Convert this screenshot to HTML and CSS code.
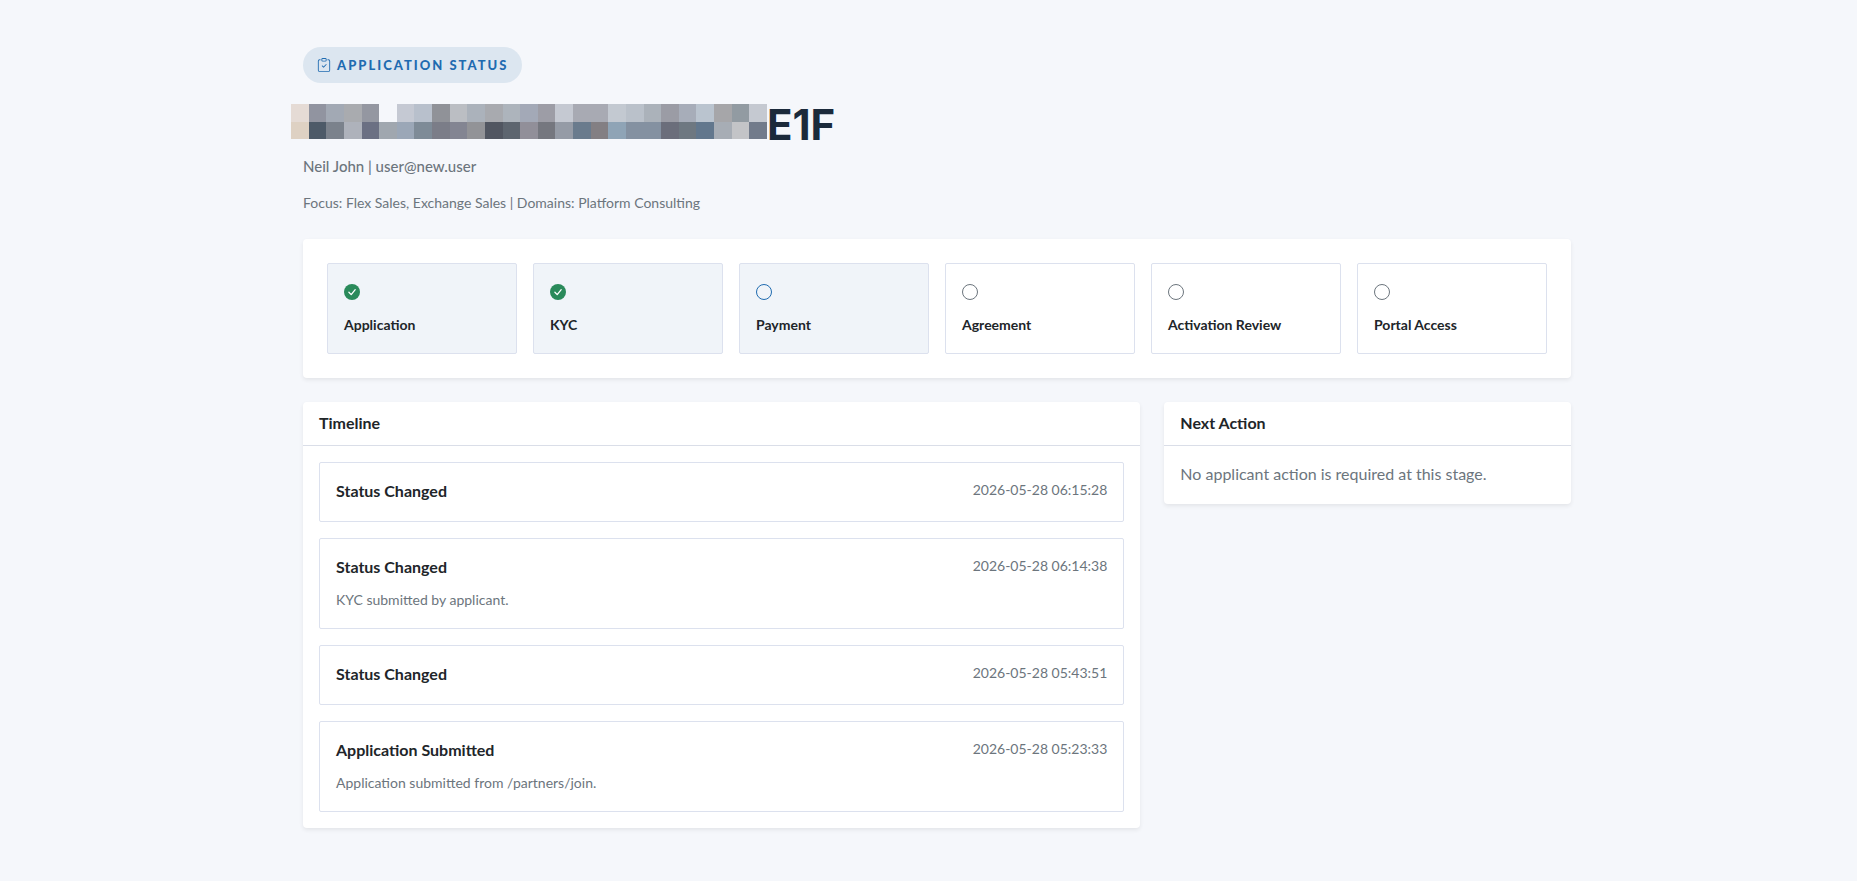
FILE: index.html
```html
<!DOCTYPE html>
<html lang="en">
<head>
<meta charset="utf-8">
<meta name="viewport" content="width=device-width, initial-scale=1">
<title>Application Status</title>
<link rel="stylesheet" href="styles.css">
</head>
<body>
<main class="page">
  <header class="intro">
    <span class="badge">
      <svg class="badge-icon" viewBox="0 0 16 16" fill="currentColor" aria-hidden="true"><path fill-rule="evenodd" d="M10.854 7.146a.5.5 0 0 1 0 .708l-3 3a.5.5 0 0 1-.708 0l-1.500-1.500a.5.5 0 1 1 .708-.708L7.500 9.793l2.646-2.647a.5.5 0 0 1 .708 0"/><path d="M4 1.500H3a2 2 0 0 0-2 2V14a2 2 0 0 0 2 2h10a2 2 0 0 0 2-2V3.500a2 2 0 0 0-2-2h-1v1h1a1 1 0 0 1 1 1V14a1 1 0 0 1-1 1H3a1 1 0 0 1-1-1V3.500a1 1 0 0 1 1-1h1z"/><path d="M9.500 1a.5.5 0 0 1 .5.5v1a.5.5 0 0 1-.5.5h-3a.5.5 0 0 1-.5-.5v-1a.5.5 0 0 1 .5-.5zm-3-1A1.500 1.500 0 0 0 5 1.500v1A1.500 1.500 0 0 0 6.500 4h3A1.500 1.500 0 0 0 11 2.500v-1A1.500 1.500 0 0 0 9.500 0z"/></svg>
      Application Status
    </span>
    <h1 class="title">
      <svg class="mask" viewBox="0 0 27 2" preserveAspectRatio="none" shape-rendering="crispEdges" aria-hidden="true">
        <path fill="#e5dbd5" d="M0 0h1v1h-1z"/><path fill="#9194a0" d="M1 0h1v1h-1z"/><path fill="#a2a9b4" d="M2 0h1v1h-1z"/><path fill="#a9abaf" d="M3 0h1v1h-1z"/><path fill="#9497a1" d="M4 0h1v1h-1z"/><path fill="#c5c9d3" d="M6 0h1v1h-1z"/><path fill="#b8c0cc" d="M7 0h1v1h-1z"/><path fill="#909298" d="M8 0h1v1h-1z"/><path fill="#bbbec3" d="M9 0h1v1h-1z"/><path fill="#abb2bb" d="M10 0h1v1h-1z"/><path fill="#a8aaaf" d="M11 0h1v1h-1z"/><path fill="#adb4bc" d="M12 0h1v1h-1z"/><path fill="#a3a9b7" d="M13 0h1v1h-1z"/><path fill="#9d9da6" d="M14 0h1v1h-1z"/><path fill="#c5c9d2" d="M15 0h1v1h-1z"/><path fill="#a8aab3" d="M16 0h2v1h-2z"/><path fill="#c3c9d1" d="M18 0h1v1h-1z"/><path fill="#bac1ca" d="M19 0h1v1h-1z"/><path fill="#abb2ba" d="M20 0h1v1h-1z"/><path fill="#9b9ca5" d="M21 0h1v1h-1z"/><path fill="#a7adb9" d="M22 0h1v1h-1z"/><path fill="#bac4cf" d="M23 0h1v1h-1z"/><path fill="#a6a6a9" d="M24 0h1v1h-1z"/><path fill="#929ba2" d="M25 0h1v1h-1z"/><path fill="#c5c9d1" d="M26 0h1v1h-1z"/>
        <path fill="#ded1c3" d="M0 1h1v1h-1z"/><path fill="#4d5a68" d="M1 1h1v1h-1z"/><path fill="#7b828c" d="M2 1h1v1h-1z"/><path fill="#aeb2bb" d="M3 1h1v1h-1z"/><path fill="#6b7083" d="M4 1h1v1h-1z"/><path fill="#a0a7af" d="M5 1h1v1h-1z"/><path fill="#9ba7b7" d="M6 1h1v1h-1z"/><path fill="#7e8b97" d="M7 1h1v1h-1z"/><path fill="#7b7d88" d="M8 1h1v1h-1z"/><path fill="#838592" d="M9 1h1v1h-1z"/><path fill="#929397" d="M10 1h1v1h-1z"/><path fill="#515661" d="M11 1h1v1h-1z"/><path fill="#5d656f" d="M12 1h1v1h-1z"/><path fill="#918f99" d="M13 1h1v1h-1z"/><path fill="#75777f" d="M14 1h1v1h-1z"/><path fill="#959ba6" d="M15 1h1v1h-1z"/><path fill="#6a7b8d" d="M16 1h1v1h-1z"/><path fill="#837f83" d="M17 1h1v1h-1z"/><path fill="#8fa4b6" d="M18 1h1v1h-1z"/><path fill="#8491a1" d="M19 1h2v1h-2z"/><path fill="#6b6e7b" d="M21 1h1v1h-1z"/><path fill="#6e7881" d="M22 1h1v1h-1z"/><path fill="#62778d" d="M23 1h1v1h-1z"/><path fill="#a7adb5" d="M24 1h1v1h-1z"/><path fill="#c3c4c7" d="M25 1h1v1h-1z"/><path fill="#727b8b" d="M26 1h1v1h-1z"/>
      </svg>
      <span class="title-text">E1F</span>
    </h1>
    <p class="applicant">Neil John | user@new.user</p>
    <p class="focus">Focus: Flex Sales, Exchange Sales | Domains: Platform Consulting</p>
  </header>

  <section class="card progress" aria-label="Progress">
    <ol class="steps">
      <li class="step is-active"><svg class="step-icon done" viewBox="0 0 16 16" aria-hidden="true"><circle cx="8" cy="8" r="8" fill="currentColor"/><path d="M4.900 8.300l2.300 2.300 4-4.900" fill="none" stroke="#fff" stroke-width="1.300" stroke-linecap="round" stroke-linejoin="round"/></svg><span class="step-name">Application</span></li>
      <li class="step is-active"><svg class="step-icon done" viewBox="0 0 16 16" aria-hidden="true"><circle cx="8" cy="8" r="8" fill="currentColor"/><path d="M4.900 8.300l2.300 2.300 4-4.900" fill="none" stroke="#fff" stroke-width="1.300" stroke-linecap="round" stroke-linejoin="round"/></svg><span class="step-name">KYC</span></li>
      <li class="step is-active"><svg class="step-icon current" viewBox="0 0 16 16" aria-hidden="true"><circle cx="8" cy="8" r="7.500" fill="none" stroke="currentColor"/></svg><span class="step-name">Payment</span></li>
      <li class="step"><svg class="step-icon" viewBox="0 0 16 16" aria-hidden="true"><circle cx="8" cy="8" r="7.500" fill="none" stroke="currentColor"/></svg><span class="step-name">Agreement</span></li>
      <li class="step"><svg class="step-icon" viewBox="0 0 16 16" aria-hidden="true"><circle cx="8" cy="8" r="7.500" fill="none" stroke="currentColor"/></svg><span class="step-name">Activation Review</span></li>
      <li class="step"><svg class="step-icon" viewBox="0 0 16 16" aria-hidden="true"><circle cx="8" cy="8" r="7.500" fill="none" stroke="currentColor"/></svg><span class="step-name">Portal Access</span></li>
    </ol>
  </section>

  <div class="columns">
    <section class="card timeline">
      <h2 class="card-header">Timeline</h2>
      <div class="card-body events">
        <article class="event">
          <div class="event-head"><h3 class="event-title">Status Changed</h3><time class="event-time">2026-05-28 06:15:28</time></div>
        </article>
        <article class="event">
          <div class="event-head"><h3 class="event-title">Status Changed</h3><time class="event-time">2026-05-28 06:14:38</time></div>
          <p class="event-note">KYC submitted by applicant.</p>
        </article>
        <article class="event">
          <div class="event-head"><h3 class="event-title">Status Changed</h3><time class="event-time">2026-05-28 05:43:51</time></div>
        </article>
        <article class="event">
          <div class="event-head"><h3 class="event-title">Application Submitted</h3><time class="event-time">2026-05-28 05:23:33</time></div>
          <p class="event-note">Application submitted from /partners/join.</p>
        </article>
      </div>
    </section>
    <section class="card next">
      <h2 class="card-header">Next Action</h2>
      <p class="card-body next-text">No applicant action is required at this stage.</p>
    </section>
  </div>
</main>
</body>
</html>
```
FILE: styles.css
```css
*, *::before, *::after { box-sizing: border-box; }
body {
  margin: 0;
  background: #f5f7fb;
  color: #212529;
  font-family: Lato, "Liberation Sans", sans-serif;
  font-size: 16px;
  line-height: 26px;
}
h1, h2, h3, p, ol { margin: 0; padding: 0; }
.page {
  max-width: 1317px;
  margin: 0 auto;
  padding: 47px 16px 47px 33px;
}
.intro { display: flex; flex-direction: column; align-items: flex-start; }
.badge {
  display: inline-flex;
  align-items: center;
  gap: 6px;
  height: 36px;
  padding: 0 14px;
  border-radius: 18px;
  background: #dce6f0;
  color: #1f6bb0;
  font-size: 13px;
  font-weight: 900;
  letter-spacing: 2px;
  text-transform: uppercase;
}
.badge-icon { width: 14px; height: 14px; }
.title {
  display: flex;
  align-items: flex-start;
  margin: 21px 0 0 -12px;
  color: #1b2a3b;
  font-family: Inter, Lato, sans-serif;
  font-size: 42px;
  font-weight: 700;
  line-height: 42px;
}
.mask { width: 476px; height: 35px; }
.applicant { margin-top: 7px; color: #6c757d; font-size: 15px; font-weight: 500; }
.focus { margin-top: 12px; color: #6c757d; font-size: 14px; line-height: 23px; }
.card {
  border-radius: 4px;
  background: #fff;
  box-shadow: 0 2px 4px rgba(0, 0, 0, .075);
}
.progress { margin-top: 25px; padding: 24px; }
.steps {
  display: grid;
  grid-template-columns: repeat(6, minmax(0, 1fr));
  gap: 16px;
  list-style: none;
}
.step {
  display: flex;
  flex-direction: column;
  gap: 13px;
  padding: 20px 16px 17px;
  border: 1px solid #dce1ee;
  border-radius: 2px;
}
.step.is-active { background: #f0f4f9; }
.step-icon { width: 16px; height: 16px; color: #6c757d; }
.step-icon.done { color: #2a8a5b; }
.step-icon.current { color: #1f6bb0; }
.step-name { font-size: 14px; font-weight: 700; line-height: 23px; }
.columns {
  display: grid;
  grid-template-columns: repeat(12, minmax(0, 1fr));
  gap: 24px;
  align-items: start;
  margin-top: 24px;
}
.timeline { grid-column: span 8; }
.next { grid-column: span 4; }
.card-header {
  padding: 8px 16px 10px;
  border-bottom: 1px solid #dadee8;
  font-size: 16px;
  font-weight: 700;
  line-height: 25px;
}
.card-body { padding: 16px; }
.events { display: grid; gap: 16px; }
.event { padding: 15px 16px 17px; border: 1px solid #dce1ee; border-radius: 2px; }
.event-head { display: flex; justify-content: space-between; align-items: flex-start; gap: 16px; }
.event-title { font-size: 16px; font-weight: 700; }
.event-time { color: #6c757d; font-size: 14px; line-height: 23px; }
.event-note { margin-top: 8px; color: #6c757d; font-size: 14px; line-height: 23px; }
.next-text { padding: 15px 16px 17px; color: #6c757d; }

@media (max-width: 900px) {
  .steps { grid-template-columns: repeat(2, minmax(0, 1fr)); }
  .timeline, .next { grid-column: span 12; }
}
```
